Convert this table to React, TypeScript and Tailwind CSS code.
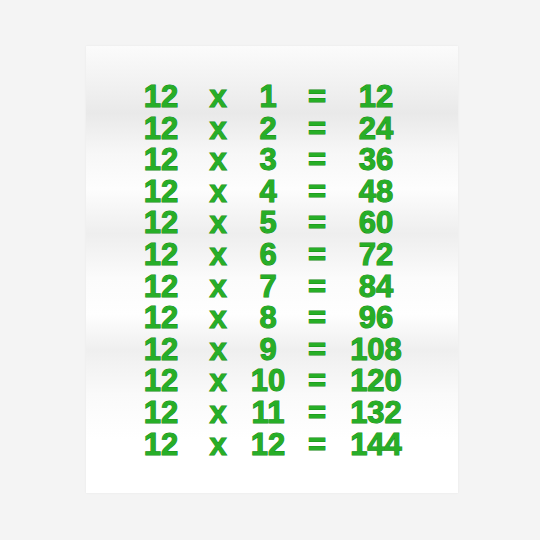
const ROWS = Array.from({ length: 12 }, (_, i) => i + 1);

function Cell({ children }: { children: React.ReactNode }) {
  return (
    <span className="text-center font-bold text-[#27ae27] [-webkit-text-stroke:1px_#138a13] [paint-order:stroke_fill]">
      {children}
    </span>
  );
}

export default function App() {
  return (
    <div className="h-[540px] w-[540px] bg-[#f4f4f4] pl-[86px] pt-[46px]">
      <div className="h-[447px] w-[372px] bg-[linear-gradient(to_bottom,#fbfbfb_0%,#f2f2f2_8%,#e9e9e9_15%,#f7f7f7_24%,#fdfdfd_32%,#eeeeee_42%,#fbfbfb_52%,#fefefe_60%,#efefef_68%,#fafafa_78%,#ffffff_88%,#ffffff_100%)] pl-[40px] pt-[35px] shadow-[0_0_2px_rgba(0,0,0,0.06)]">
        <div className="grid grid-cols-[70px_44px_56px_42px_76px] font-['Liberation_Sans',Arial,sans-serif] text-[31px] leading-[31.6px]">
          {ROWS.map((n) => (
            <div key={n} className="contents">
              <Cell>12</Cell>
              <Cell>x</Cell>
              <Cell>{n}</Cell>
              <Cell>=</Cell>
              <Cell>{12 * n}</Cell>
            </div>
          ))}
        </div>
      </div>
    </div>
  );
}
